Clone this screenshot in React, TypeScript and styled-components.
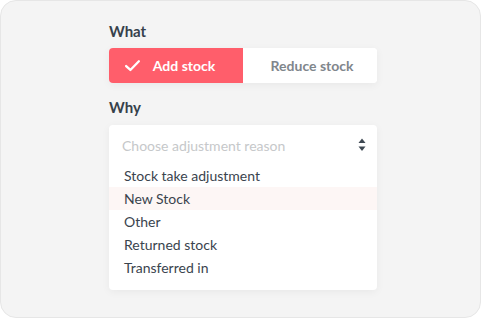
import React from "react"
import styled, { createGlobalStyle } from "styled-components"

const GlobalStyle = createGlobalStyle`
  html, body {
    margin: 0;
    padding: 0;
    background: #ffffff;
  }
  body {
    font-family: Lato, "Open Sans", sans-serif;
  }
`

const reasons = [
  "Stock take adjustment",
  "New Stock",
  "Other",
  "Returned stock",
  "Transferred in",
]

const App: React.FunctionComponent = () => {
  return (
    <>
      <GlobalStyle />
      <Card>
        <Form>
          <Label>What</Label>
          <Toggle>
            <ToggleButton $active>
              <CheckIcon viewBox="0 0 16 16">
                <path d="M2 8.5 L6 12.2 L14 4" />
              </CheckIcon>
              Add stock
            </ToggleButton>
            <ToggleButton>Reduce stock</ToggleButton>
          </Toggle>

          <Label $spaced>Why</Label>
          <Select>
            <SelectHead>
              <Placeholder>Choose adjustment reason</Placeholder>
              <SortIcon viewBox="0 0 8 14">
                <path d="M4 0.5 L7.5 5 L0.5 5 Z" />
                <path d="M0.5 8.5 L7.5 8.5 L4 13 Z" />
              </SortIcon>
            </SelectHead>
            <OptionList>
              {reasons.map((r) => (
                <Option key={r} $highlight={r === "New Stock"}>
                  {r}
                </Option>
              ))}
            </OptionList>
          </Select>
        </Form>
      </Card>
    </>
  )
}

const Card = styled.div`
  box-sizing: border-box;
  width: 481px;
  height: 318px;
  background: #f4f4f4;
  border: 1px solid #e6e6e6;
  border-radius: 16px;
  padding-left: 108px;
`

const Form = styled.div`
  width: 268px;
  padding-top: 21px;
`

const Label = styled.div<{ $spaced?: boolean }>`
  font-size: 15px;
  font-weight: 700;
  color: #36414b;
  line-height: 18px;
  margin-top: ${(p) => (p.$spaced ? "15px" : "0")};
  margin-bottom: ${(p) => (p.$spaced ? "9px" : "8px")};
`

const Toggle = styled.div`
  display: grid;
  grid-template-columns: 134px 134px;
  height: 35px;
  border-radius: 4px;
  overflow: hidden;
  background: #ffffff;
  box-shadow: 0 2px 8px rgba(0, 0, 0, 0.05);
`

const ToggleButton = styled.div<{ $active?: boolean }>`
  display: flex;
  align-items: center;
  justify-content: center;
  gap: 12px;
  font-size: 14px;
  font-weight: 700;
  color: ${(p) => (p.$active ? "#ffffff" : "#7f868c")};
  background: ${(p) => (p.$active ? "#ff5e6b" : "#ffffff")};
  padding-right: ${(p) => (p.$active ? "13px" : "0")};
  padding-left: ${(p) => (p.$active ? "0" : "4px")};
`

const CheckIcon = styled.svg`
  width: 17px;
  height: 17px;
  fill: none;
  stroke: #ffffff;
  stroke-width: 2.2;
  stroke-linecap: round;
  stroke-linejoin: round;
`

const Select = styled.div`
  background: #ffffff;
  border-radius: 4px;
  box-shadow: 0 2px 8px rgba(0, 0, 0, 0.05);
  padding-bottom: 11px;
`

const SelectHead = styled.div`
  display: flex;
  align-items: center;
  justify-content: space-between;
  height: 40px;
  padding: 0 11px 0 13px;
  box-sizing: border-box;
  margin-bottom: -1px;
`

const Placeholder = styled.span`
  font-size: 14px;
  color: #c6c8ca;
`

const SortIcon = styled.svg`
  width: 8px;
  height: 14px;
  fill: #3e4852;
`

const OptionList = styled.ul`
  list-style: none;
  margin: 0;
  padding: 0;
`

const Option = styled.li<{ $highlight?: boolean }>`
  height: 23px;
  line-height: 23px;
  padding-left: 15px;
  font-size: 14px;
  color: #3a444e;
  background: ${(p) => (p.$highlight ? "#fdf6f5" : "transparent")};
`

export default App
